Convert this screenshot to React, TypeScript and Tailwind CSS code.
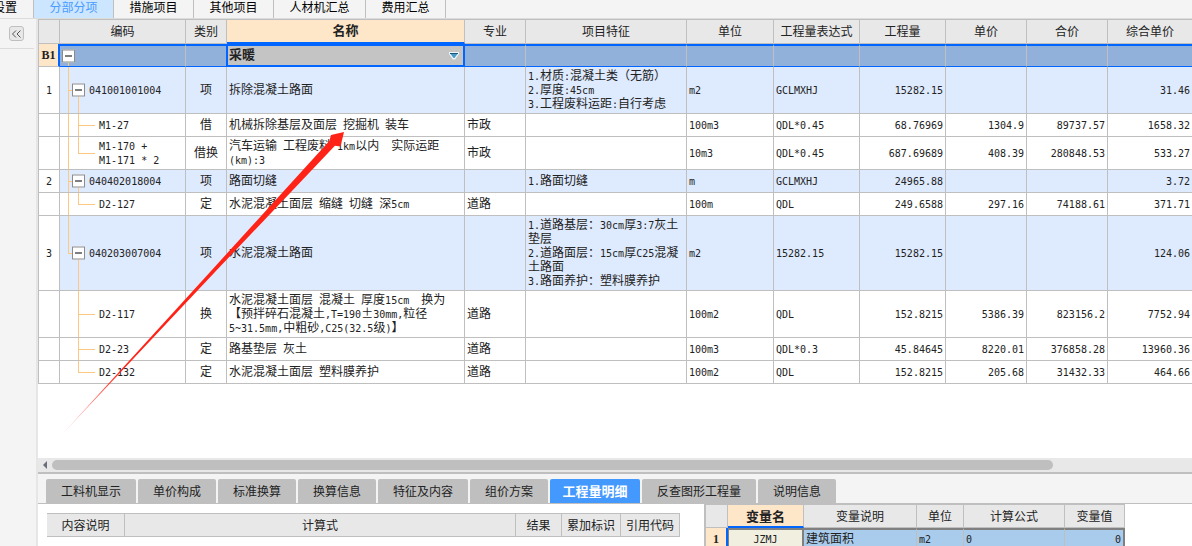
import { clsx } from 'clsx'
import type { ReactNode } from 'react'

type Row = {
  no?: string
  code: string
  kind: string
  name: string
  major?: string
  feature?: string
  unit: string
  expr: string
  qty: string
  price?: string
  total?: string
  composite: string
  section?: boolean
  last?: boolean
  outer?: boolean
  height: string
}

const rows: Row[] = [
  { no: '1', code: '041001001004', kind: '项', name: '拆除混凝土路面', feature: '1.材质:混凝土类（无筋）\n2.厚度:45cm\n3.工程废料运距:自行考虑', unit: 'm2', expr: 'GCLMXHJ', qty: '15282.15', composite: '31.46', section: true, outer: true, height: 'h-[47px]' },
  { code: 'M1-27', kind: '借', name: '机械拆除基层及面层 挖掘机 装车', major: '市政', unit: '100m3', expr: 'QDL*0.45', qty: '68.76969', price: '1304.9', total: '89737.57', composite: '1658.32', outer: true, height: 'h-[23px]' },
  { code: 'M1-170 +\nM1-171 * 2', kind: '借换', name: '汽车运输 工程废料 1km以内  实际运距\n(km):3', major: '市政', unit: '10m3', expr: 'QDL*0.45', qty: '687.69689', price: '408.39', total: '280848.53', composite: '533.27', outer: true, last: true, height: 'h-[33px]' },
  { no: '2', code: '040402018004', kind: '项', name: '路面切缝', feature: '1.路面切缝', unit: 'm', expr: 'GCLMXHJ', qty: '24965.88', composite: '3.72', section: true, outer: true, height: 'h-[23px]' },
  { code: 'D2-127', kind: '定', name: '水泥混凝土面层 缩缝 切缝 深5cm', major: '道路', unit: '100m', expr: 'QDL', qty: '249.6588', price: '297.16', total: '74188.61', composite: '371.71', outer: true, last: true, height: 'h-[23px]' },
  { no: '3', code: '040203007004', kind: '项', name: '水泥混凝土路面', feature: '1.道路基层：30cm厚3:7灰土\n垫层\n2.道路面层：15cm厚C25混凝\n土路面\n3.路面养护：塑料膜养护', unit: 'm2', expr: '15282.15', qty: '15282.15', composite: '124.06', section: true, last: true, outer: true, height: 'h-[75px]' },
  { code: 'D2-117', kind: '换', name: '水泥混凝土面层 混凝土 厚度15cm  换为\n【预拌碎石混凝土,T=190±30mm,粒径\n5~31.5mm,中粗砂,C25(32.5级)】', major: '道路', unit: '100m2', expr: 'QDL', qty: '152.8215', price: '5386.39', total: '823156.2', composite: '7752.94', height: 'h-[47px]' },
  { code: 'D2-23', kind: '定', name: '路基垫层 灰土', major: '道路', unit: '100m3', expr: 'QDL*0.3', qty: '45.84645', price: '8220.01', total: '376858.28', composite: '13960.36', height: 'h-[23px]' },
  { code: 'D2-132', kind: '定', name: '水泥混凝土面层 塑料膜养护', major: '道路', unit: '100m2', expr: 'QDL', qty: '152.8215', price: '205.68', total: '31432.33', composite: '464.66', last: true, height: 'h-[23px]' },
]

const headers = ['', '编码', '类别', '名称', '专业', '项目特征', '单位', '工程量表达式', '工程量', '单价', '合价', '综合单价']

const pageTabs = [
  { label: '设置', className: 'flex w-[34px] justify-end pr-4' },
  { label: '分部分项', className: 'w-20 bg-[#cce6ff] text-[#4a9cff]' },
  { label: '措施项目', className: 'w-20' },
  { label: '其他项目', className: 'w-20' },
  { label: '人材机汇总', className: 'w-[92px]' },
  { label: '费用汇总', className: 'w-20' },
]

const detailTabs = [
  { label: '工料机显示', width: 'w-[90px]' },
  { label: '单价构成', width: 'w-[78px]' },
  { label: '标准换算', width: 'w-[78px]' },
  { label: '换算信息', width: 'w-[78px]' },
  { label: '特征及内容', width: 'w-[90px]' },
  { label: '组价方案', width: 'w-[78px]' },
  { label: '工程量明细', width: 'w-[90px]' },
  { label: '反查图形工程量', width: 'w-[114px]' },
  { label: '说明信息', width: 'w-[78px]' },
]

// Latin runs are set in a half-width mono face so they line up with the Chinese grid
function Mixed({ text }: { text: string }) {
  return (
    <>
      {text.split(/([\x20-\x7e]+)/).map((part, i) =>
        i % 2 ? (
          <span className="font-['DejaVu_Sans_Mono',monospace] text-[10px] leading-none" key={i}>{part}</span>
        ) : (
          part
        ),
      )}
    </>
  )
}

function Cell({ children, className }: { children?: ReactNode; className?: string }) {
  return <td className={clsx('border-r border-b border-[#bfbfbf] px-0.5 pb-0.5 whitespace-pre', className)}>{children}</td>
}

function Toggle({ label, className }: { label: string; className: string }) {
  return (
    <button
      aria-expanded="true"
      aria-label={label}
      className={clsx('absolute top-1/2 flex size-[13px] -translate-y-1/2 items-center justify-center border border-[#8c8c8c] bg-white', className)}
      type="button"
    >
      <span className="h-px w-[7px] bg-black"></span>
    </button>
  )
}

function TreeLines({ row }: { row: Row }) {
  return (
    <span aria-hidden="true">
      {row.outer && <span className={clsx('absolute top-0 left-2 w-px bg-[#ffc880]', row.section && row.last ? 'h-1/2' : 'h-full')}></span>}
      {row.section ? (
        <>
          <span className="absolute top-1/2 left-2 h-px w-1 bg-[#ffc880]"></span>
          <span className="absolute top-1/2 left-[18px] h-1/2 w-px bg-[#ffc880]"></span>
        </>
      ) : (
        <>
          <span className={clsx('absolute top-0 left-[18px] w-px bg-[#ffc880]', row.last ? 'h-1/2' : 'h-full')}></span>
          <span className="absolute top-1/2 left-[18px] h-px w-[17px] bg-[#ffc880]"></span>
        </>
      )}
    </span>
  )
}

function SelectedRow() {
  const edge = 'border-y-2 border-y-[#0066ff] bg-[#91b1db]'

  return (
    <tr>
      <td className="h-[23px] border-r-2 border-b border-[#bfbfbf] border-r-[#0066ff] bg-[#fee6c8] p-0 text-center font-['Liberation_Serif',serif] font-bold">B1</td>
      <Cell className={clsx('relative', edge)}>
        <span aria-hidden="true" className="absolute bottom-0 left-2 h-1 w-px bg-[#ffc880]"></span>
        <Toggle className="left-0.5" label="收起 采暖" />
      </Cell>
      <Cell className={clsx(edge, 'border-r-[#0066ff]')} />
      <td className="relative border-x-2 border-y-2 border-l border-[#0066ff] bg-[#c4c4c4] p-0">
        <select aria-label="名称" className="block h-[19px] w-full appearance-none bg-transparent px-px pr-5 pb-1 text-[13px] leading-[15px] font-bold outline-none">
          <option>采暖</option>
        </select>
        <svg aria-hidden="true" className="pointer-events-none absolute top-1.5 right-1 h-2 w-2.5" viewBox="0 0 10 8">
          <path d="M0 1V0h10v2L6 7.5H4L0 2z" fill="#eef6fb" />
          <path d="M1.5 2h7L5.5 6h-1z" fill="#4b9bc9" />
          <path d="M1 1h8v1H1z" fill="#16547a" />
        </svg>
      </td>
      {headers.slice(4).map((header) => (
        <Cell className={clsx(edge, 'last:border-r-0')} key={header} />
      ))}
    </tr>
  )
}

function QuantityTable() {
  return (
    <table className="w-full table-fixed border-separate border-spacing-0 border-t border-l border-[#bfbfbf]">
      <colgroup>
        <col className="w-[21px]" />
        <col className="w-[126px]" />
        <col className="w-[41px]" />
        <col />
        <col className="w-[61px]" />
        <col className="w-[161px]" />
        <col className="w-[87px]" />
        <col className="w-[86px]" />
        <col className="w-[86px]" />
        <col className="w-[81px]" />
        <col className="w-[81px]" />
        <col className="w-[84px]" />
      </colgroup>
      <thead>
        <tr>
          {headers.map((header) => (
            <th
              className={clsx(
                'h-6 border-r border-b p-0 pb-0.5 last:border-r-0',
                header === '名称' ? 'border-r-[#bfbfbf] border-b-2 border-b-[#0066ff] bg-[#fee6c8] text-[13px] font-bold' : 'border-[#bfbfbf] bg-[#e8e8e8] font-normal',
              )}
              key={header}
            >
              {header}
            </th>
          ))}
        </tr>
      </thead>
      <tbody>
        <SelectedRow />
        {rows.map((row) => (
          <tr className={row.section ? 'bg-[#deeafe]' : 'bg-white'} key={row.code}>
            <Cell className={clsx('bg-white text-center', row.height)}><Mixed text={row.no ?? ''} /></Cell>
            <Cell className={clsx('relative', row.section ? 'pl-[29px]' : 'pl-[39px]')}>
              <TreeLines row={row} />
              {row.section && <Toggle className="left-3" label={`收起 ${row.code}`} />}
              <Mixed text={row.code} />
            </Cell>
            <Cell className="text-center">{row.kind}</Cell>
            <Cell><Mixed text={row.name} /></Cell>
            <Cell>{row.major}</Cell>
            <Cell><Mixed text={row.feature ?? ''} /></Cell>
            <Cell><Mixed text={row.unit} /></Cell>
            <Cell><Mixed text={row.expr} /></Cell>
            <Cell className="text-right"><Mixed text={row.qty} /></Cell>
            <Cell className="text-right"><Mixed text={row.price ?? ''} /></Cell>
            <Cell className="text-right"><Mixed text={row.total ?? ''} /></Cell>
            <Cell className="border-r-0 text-right"><Mixed text={row.composite} /></Cell>
          </tr>
        ))}
      </tbody>
    </table>
  )
}

function FormulaTable() {
  return (
    <table className="w-full table-fixed border-separate border-spacing-0">
      <colgroup>
        <col className="w-[78px]" />
        <col />
        <col className="w-[46px]" />
        <col className="w-[59px]" />
        <col className="w-[59px]" />
      </colgroup>
      <thead>
        <tr>
          {['内容说明', '计算式', '结果', '累加标识', '引用代码'].map((header) => (
            <th className="h-6 border-y border-r border-[#bfbfbf] bg-[#e8e8e8] p-0 font-normal" key={header}>{header}</th>
          ))}
        </tr>
      </thead>
    </table>
  )
}

function VariableTable() {
  const head = 'h-6 border-t border-r border-b border-[#bfbfbf] bg-[#e8e8e8] p-0 font-normal'
  const cell = 'h-[22px] border-t-2 border-r border-t-[#808080] border-r-[#bfbfbf] bg-[#aaccec] px-0.5 pb-1'

  return (
    <table className="w-[419px] table-fixed border-separate border-spacing-0">
      <colgroup>
        <col className="w-[22px]" />
        <col className="w-[76px]" />
        <col className="w-[113px]" />
        <col className="w-[47px]" />
        <col className="w-[101px]" />
        <col className="w-[60px]" />
      </colgroup>
      <thead>
        <tr>
          <th className={head}></th>
          <th className="border-t border-r border-b-2 border-[#bfbfbf] border-b-[#0066ff] bg-[#fee6c8] p-0 text-[13px] font-bold">变量名</th>
          <th className={head}>变量说明</th>
          <th className={head}>单位</th>
          <th className={head}>计算公式</th>
          <th className={head}>变量值</th>
        </tr>
      </thead>
      <tbody>
        <tr>
          <td className="border-r-2 border-[#0066ff] bg-[#fee6c8] p-0 text-center font-['Liberation_Serif',serif] font-bold">1</td>
          <td className="border-t-2 border-r-2 border-l border-[#808080] bg-[#f0efe0] p-0 pb-1 text-center"><Mixed text="JZMJ" /></td>
          <td className={cell}>建筑面积</td>
          <td className={cell}><Mixed text="m2" /></td>
          <td className={cell}><Mixed text="0" /></td>
          <td className="border-t-2 border-r-2 border-[#808080] bg-[#aaccec] px-0.5 pb-1 text-right"><Mixed text="0" /></td>
        </tr>
      </tbody>
    </table>
  )
}

function PointerArrow() {
  return (
    <svg aria-hidden="true" className="pointer-events-none absolute top-[131px] left-[62px] h-[304px] w-[284px]" viewBox="0 0 284 304">
      <defs>
        <linearGradient gradientUnits="userSpaceOnUse" id="tail" x1="0" x2="60" y1="303" y2="240">
          <stop offset="0" stopColor="#ff2317" stopOpacity="0.2" />
          <stop offset="1" stopColor="#ff2317" />
        </linearGradient>
      </defs>
      <path d="M0 303.500L155.600 132.700L267.300 10L269 4L282 1L278.500 15.500L272.900 14.700L158.400 135.300Z" fill="url(#tail)" />
    </svg>
  )
}

export default function App() {
  return (
    <div className="relative flex h-screen flex-col overflow-hidden bg-[#f4f4f4] font-['Noto_Sans_CJK_SC',sans-serif] text-xs leading-[14px] text-[#222]">
      <nav className="flex h-[19px] shrink-0 items-start overflow-hidden border-b border-[#dcdcdc] text-black">
        {pageTabs.map(({ label, className }) => (
          <button className={clsx('h-[18px] shrink-0 border-r border-[#bfbfbf] pb-1.5 whitespace-nowrap', className)} key={label} type="button">
            {label}
          </button>
        ))}
      </nav>

      <div className="flex min-h-0 flex-1">
        <aside className="w-[38px] shrink-0 border-r-2 border-[#e6e6e6]">
          <div className="mr-0.5 flex h-[30px] items-center border-b border-[#dcdcdc] pl-[9px]">
            <button aria-label="收起侧栏" className="flex size-[15px] items-center justify-center rounded-[3px] border border-[#bfbfbf] bg-[#e8e8e8]" type="button">
              <svg aria-hidden="true" className="h-2 w-[11px]" fill="none" stroke="#555" viewBox="0 0 11 8">
                <path d="M5 .5L1.500 4L5 7.500M9.500 .5L6 4l3.500 3.500" />
              </svg>
            </button>
          </div>
        </aside>

        <main className="flex min-w-0 flex-1 flex-col">
          <section className="min-h-0 flex-1 overflow-hidden bg-white">
            <QuantityTable />
          </section>

          <div className="flex h-4 shrink-0 items-center border-b-2 border-[#bfbfbf] bg-[#e8e8e8] pl-1">
            <svg aria-hidden="true" className="mr-1 h-2 w-1.5" viewBox="0 0 6 8">
              <path d="M5 0v8L1 4z" fill="#6b6f78" />
            </svg>
            <div className="h-2.5 w-[87%] rounded-full bg-[#bfbfbf]"></div>
          </div>

          <section className="h-[72px] shrink-0 overflow-hidden">
            <div className="flex gap-0.5 border-b border-[#bfbfbf] pt-[5px] pl-2">
              {detailTabs.map(({ label, width }) => (
                <button
                  className={clsx(
                    'h-6 shrink-0 rounded-t-xs',
                    width,
                    label === '工程量明细' ? 'bg-[#4499ff] text-[13px] font-bold text-white' : 'bg-[#bfbfbf]',
                  )}
                  key={label}
                  type="button"
                >
                  {label}
                </button>
              ))}
            </div>
            <div className="flex h-full bg-white">
              <div className="flex-1 pt-[9px] pr-6 pl-[9px]">
                <FormulaTable />
              </div>
              <div className="w-[488px] shrink-0 border-l-2 border-[#bfbfbf]">
                <VariableTable />
              </div>
            </div>
          </section>
        </main>
      </div>

      <PointerArrow />
    </div>
  )
}
